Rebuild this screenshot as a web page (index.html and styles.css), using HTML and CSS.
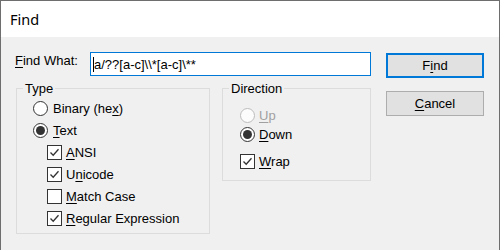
FILE: index.html
```html
<!DOCTYPE html>
<html>
<head>
<meta charset="utf-8">
<link rel="stylesheet" href="styles.css">
</head>
<body>
<div class="window">
  <div class="titlebar"><span class="title">Find</span></div>
  <div class="body">
    <div class="main">
      <div class="find-row">
        <span class="find-label"><u>F</u>ind What:</span>
        <div class="input"><span class="caret"></span><span class="value">a/??[a-c]\\*[a-c]\**</span></div>
      </div>
      <div class="groups">
        <fieldset class="group type">
          <legend>Type</legend>
          <div class="opts">
            <div class="opt radio-opt"><span class="radio"></span><span>Binary (he<u>x</u>)</span></div>
            <div class="opt radio-opt"><span class="radio on"></span><span><u>T</u>ext</span></div>
            <div class="opt check-opt"><span class="check on"><svg viewBox="0 0 13 13" width="13" height="13"><polyline points="2.5,6.5 5.2,9.3 10.5,3.2" /></svg></span><span><u>A</u>NSI</span></div>
            <div class="opt check-opt"><span class="check on"><svg viewBox="0 0 13 13" width="13" height="13"><polyline points="2.5,6.5 5.2,9.3 10.5,3.2" /></svg></span><span>U<u>n</u>icode</span></div>
            <div class="opt check-opt"><span class="check"></span><span><u>M</u>atch Case</span></div>
            <div class="opt check-opt"><span class="check on"><svg viewBox="0 0 13 13" width="13" height="13"><polyline points="2.5,6.5 5.2,9.3 10.5,3.2" /></svg></span><span><u>R</u>egular Expression</span></div>
          </div>
        </fieldset>
        <fieldset class="group direction">
          <legend>Direction</legend>
          <div class="dir-opts">
            <div class="dopt disabled"><span class="radio"></span><span><u>U</u>p</span></div>
            <div class="dopt"><span class="radio on"></span><span><u>D</u>own</span></div>
            <div class="dopt wrap"><span class="check on"><svg viewBox="0 0 13 13" width="13" height="13"><polyline points="2.5,6.5 5.2,9.3 10.5,3.2" /></svg></span><span><u>W</u>rap</span></div>
          </div>
        </fieldset>
      </div>
    </div>
    <div class="buttons">
      <div class="btn default">F<u>i</u>nd</div>
      <div class="btn"><u>C</u>ancel</div>
    </div>
  </div>
</div>
</body>
</html>
```
FILE: styles.css
```css
* { box-sizing: border-box; }
html, body { margin: 0; padding: 0; background: #f0f0f0; }
body {
  font-family: "Liberation Sans", Arial, sans-serif;
  font-size: 13px;
  color: #000;
}
u { text-decoration: underline; text-underline-offset: 2px; }

.window {
  width: 500px;
  height: 250px;
  border: 1px solid #6e6e6e;
  border-bottom: none;
  background: #f0f0f0;
  display: flex;
  flex-direction: column;
}
.titlebar {
  height: 36px;
  background: #fff;
  display: flex;
  align-items: center;
  padding-left: 9px;
  flex: none;
}
.title {
  font-family: "Noto Sans", "Open Sans", sans-serif;
  font-size: 14.5px;
  color: #000;
}

.body {
  flex: 1;
  display: flex;
  padding: 15px 0 0 14px;
}
.main { width: 356px; }

.find-row { display: flex; height: 24px; }
.find-label {
  width: 75px;
  line-height: 15px;
  margin-top: 1px;
  align-self: flex-start;
}
.input {
  width: 281px;
  height: 24px;
  border: 1px solid #0078d7;
  background: #fff;
  padding-left: 2px;
  display: flex;
  align-items: center;
  white-space: nowrap;
  overflow: hidden;
}
.caret {
  width: 1px;
  height: 15px;
  background: #000;
  flex: none;
}
.value { margin-left: 0; }

.groups {
  display: flex;
  gap: 12px;
  margin-top: 5px;
  margin-left: 1px;
}
.group {
  margin: 0;
  padding: 0;
  border: 1px solid #dcdcdc;
  min-width: 0;
}
.group legend {
  padding: 0 2px;
  margin-left: 6px;
  line-height: 15px;
}
.type { width: 194px; }
.direction { width: 149px; align-self: flex-start; }

.opts { padding: 1px 0 4px 0; }
.opt {
  height: 22px;
  display: flex;
  align-items: center;
}
.radio-opt { padding-left: 16px; }
.check-opt { padding-left: 30px; }

.radio {
  width: 15px;
  height: 15px;
  border: 1px solid #333;
  border-radius: 50%;
  background: #fff;
  display: flex;
  align-items: center;
  justify-content: center;
  margin-right: 5px;
  flex: none;
}
.radio.on::after {
  content: "";
  width: 9px;
  height: 9px;
  border-radius: 50%;
  background: #333;
}
.check {
  width: 15px;
  height: 15px;
  border: 1px solid #333;
  background: #fff;
  margin-right: 4px;
  flex: none;
  display: flex;
}
.check svg polyline {
  fill: none;
  stroke: #333;
  stroke-width: 1.3;
}

.dir-opts { padding: 10px 0 9px 17px; }
.dopt {
  height: 19px;
  display: flex;
  align-items: center;
}
.dopt.wrap { margin-top: 8px; }
.dopt .radio { margin-right: 4px; }
.dopt.disabled { color: #a0a0a0; }
.dopt.disabled .radio { border-color: #bcbcbc; background: #fcfcfc; }

.buttons {
  margin-left: 15px;
  width: 98px;
  display: flex;
  flex-direction: column;
}
.btn {
  height: 25px;
  background: #e1e1e1;
  border: 1px solid #adadad;
  display: flex;
  align-items: center;
  justify-content: center;
  margin-top: 13px;
}
.btn.default {
  border: 2px solid #0078d7;
  margin-top: 1px;
}
```
